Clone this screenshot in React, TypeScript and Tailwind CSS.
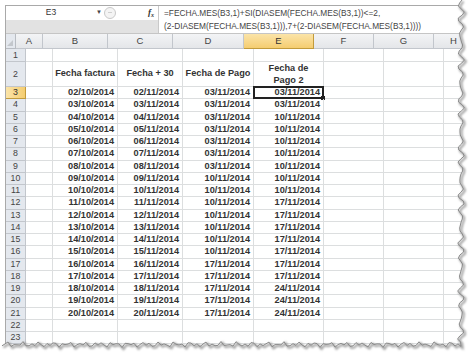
import React from 'react';

const font = { fontFamily: '"Liberation Sans", Arial, sans-serif' };

// column widths: row header, A..H
const colW = ['w-[20px]', 'w-[27px]', 'w-[65px]', 'w-[65px]', 'w-[71px]', 'w-[70px]', 'w-[60px]', 'w-[60px]', 'w-[40px]'];
const letters = ['A', 'B', 'C', 'D', 'E', 'F', 'G', 'H'];

const pad = (n: number) => (n < 10 ? `0${n}` : `${n}`);

const rows = Array.from({ length: 19 }, (_, i) => {
  const day = pad(i + 2);
  const d = i < 7 ? '03/11/2014' : i < 14 ? '10/11/2014' : '17/11/2014';
  const e = i < 2 ? '03/11/2014' : i < 9 ? '10/11/2014' : i < 16 ? '17/11/2014' : '24/11/2014';
  return [`${day}/10/2014`, `${day}/11/2014`, d, e];
});

function tornPath() {
  const right: string[] = [];
  for (let y = 0; y <= 344; y += 3) {
    const x = 461 + 2.2 * Math.sin(y * 1.7) + 1.2 * Math.sin(y * 0.53 + 1);
    right.push(`${x.toFixed(1)},${y}`);
  }
  const bottom: string[] = [];
  for (let x = 461; x >= 0; x -= 3) {
    const y = 344.5 + 1.8 * Math.sin(x * 1.3) + 1.2 * Math.sin(x * 0.41 + 2);
    bottom.push(`${x},${y.toFixed(1)}`);
  }
  return [...right, ...bottom];
}

function TornEdge() {
  const pts = tornPath();
  const line = `M ${pts.join(' L ')}`;
  const outside = `M 474,0 L ${pts.join(' L ')} L 0,355 L 474,355 Z`;
  return (
    <svg className="absolute inset-0" width="474" height="355" viewBox="0 0 474 355">
      <defs>
        <filter id="blur" x="-10%" y="-10%" width="120%" height="120%">
          <feGaussianBlur stdDeviation="1.2" />
        </filter>
      </defs>
      <path d={outside} fill="#ffffff" />
      <path d={line} transform="translate(1.5,1.5)" fill="none" stroke="#9a9a9a" strokeWidth="2" filter="url(#blur)" />
      <path d={line} fill="none" stroke="#8a8a8a" strokeWidth="1" />
    </svg>
  );
}

export default function App() {
  return (
    <div className="relative w-[474px] h-[355px] overflow-hidden bg-white pl-[5px] pt-[5px]" style={font}>
      <div className="w-[469px] border-l border-t border-[#a9a9a9] bg-white">
        {/* Formula bar */}
        <div className="flex h-[28px] border-b border-[#c5c5c5]">
          <div className="flex w-[152px] flex-col">
            <div className="flex h-[14px] items-center bg-white">
              <div className="flex w-[96px] items-center">
                <span className="w-[90px] text-center text-[8.5px] text-[#333]">E3</span>
                <span className="text-[6px] text-[#444]">▼</span>
              </div>
              <div className="ml-[2px] flex h-[12px] w-[12px] items-center justify-center rounded-full border border-[#c9c9c9] bg-[#f4f4f4]">
                <span className="h-px w-[4px] bg-[#d0d0d0]" />
              </div>
              <span
                className="ml-auto mr-[4px] text-[9px] font-bold italic text-[#333]"
                style={{ fontFamily: '"Liberation Serif", serif' }}
              >
                f<sub className="text-[6px]">x</sub>
              </span>
            </div>
            <div className="h-[14px] bg-[#e2e2e2]" />
          </div>
          <div className="flex-1 border-l border-[#c9c9c9] bg-white pl-[5px] pt-[1px] text-[8.3px] leading-[13px] text-[#444]">
            <div>=FECHA.MES(B3,1)+SI(DIASEM(FECHA.MES(B3,1))&lt;=2,</div>
            <div>(2-DIASEM(FECHA.MES(B3,1))),7+(2-DIASEM(FECHA.MES(B3,1))))</div>
          </div>
        </div>

        {/* Column headers */}
        <div className="flex h-[15px]">
          <div className={`${colW[0]} relative border-b border-r border-[#b8bcc2] bg-[#e4e8ee]`}>
            <span className="absolute bottom-[2px] right-[2px] h-0 w-0 border-b-[6px] border-l-[6px] border-b-[#c3c7cc] border-l-transparent" />
          </div>
          {letters.map((l, i) => (
            <div
              key={l}
              className={`${colW[i + 1]} flex shrink-0 items-center justify-center border-b border-r text-[9.5px] ${
                l === 'E'
                  ? 'border-[#c29b3c] bg-gradient-to-b from-[#fbe4a8] to-[#f5cd70] text-[#333]'
                  : 'border-[#c2c6cc] bg-gradient-to-b from-[#f3f4f6] to-[#e4e6e9] text-[#444]'
              }`}
            >
              {l}
            </div>
          ))}
        </div>

        {/* Row 1 */}
        <Row label="1" h="h-[13px]" />

        {/* Row 2: titles */}
        <div className="flex h-[25px]">
          <RowHead label="2" />
          <Cell i={1} />
          {['Fecha factura', 'Fecha + 30', 'Fecha de Pago'].map((t, k) => (
            <div
              key={t}
              className={`${colW[k + 2]} flex shrink-0 items-center justify-center whitespace-nowrap border-b border-r border-[#dcdedf] text-[9.2px] font-bold text-[#333]`}
            >
              {t}
            </div>
          ))}
          <div className={`${colW[5]} flex shrink-0 flex-col items-center justify-center border-b border-r border-[#dcdedf] text-[9.2px] font-bold leading-[12px] text-[#333]`}>
            <span>Fecha de</span>
            <span>Pago 2</span>
          </div>
          <Cell i={6} />
          <Cell i={7} />
          <Cell i={8} />
        </div>

        {/* Data rows */}
        {rows.map((r, idx) => (
          <div key={idx} className="flex h-[12.25px]">
            <RowHead label={`${idx + 3}`} active={idx === 0} />
            <Cell i={1} />
            {r.map((v, k) => (
              <div
                key={k}
                className={`${colW[k + 2]} relative flex shrink-0 items-center justify-end border-b border-r border-[#dcdedf] pr-[3px] text-[9.2px] font-bold text-[#333]`}
              >
                {idx === 0 && k === 3 && (
                  <span className="absolute -left-px -top-px bottom-[-1px] right-[-1px] border-2 border-[#222]">
                    <span className="absolute -bottom-[3px] -right-[3px] h-[4px] w-[4px] bg-[#222]" />
                  </span>
                )}
                <span className="relative leading-none">{v}</span>
              </div>
            ))}
            <Cell i={6} />
            <Cell i={7} />
            <Cell i={8} />
          </div>
        ))}

        <Row label="22" h="h-[12.25px]" />
        <Row label="23" h="h-[12.25px]" />
      </div>
      <TornEdge />
    </div>
  );
}

function RowHead({ label, active }: { label: string; active?: boolean }) {
  return (
    <div
      className={`${colW[0]} flex shrink-0 items-center justify-center border-b border-r text-[8.8px] leading-none ${
        active
          ? 'border-[#c29b3c] bg-gradient-to-r from-[#fbe4a8] to-[#f5cd70] text-[#333]'
          : 'border-[#c2c6cc] bg-[#e4e8ee] text-[#444]'
      }`}
    >
      {label}
    </div>
  );
}

function Cell({ i }: { i: number }) {
  return <div className={`${colW[i]} shrink-0 border-b border-r border-[#dcdedf]`} />;
}

function Row({ label, h }: { label: string; h: string }) {
  return (
    <div className={`flex ${h}`}>
      <RowHead label={label} />
      {[1, 2, 3, 4, 5, 6, 7, 8].map((i) => (
        <Cell key={i} i={i} />
      ))}
    </div>
  );
}
